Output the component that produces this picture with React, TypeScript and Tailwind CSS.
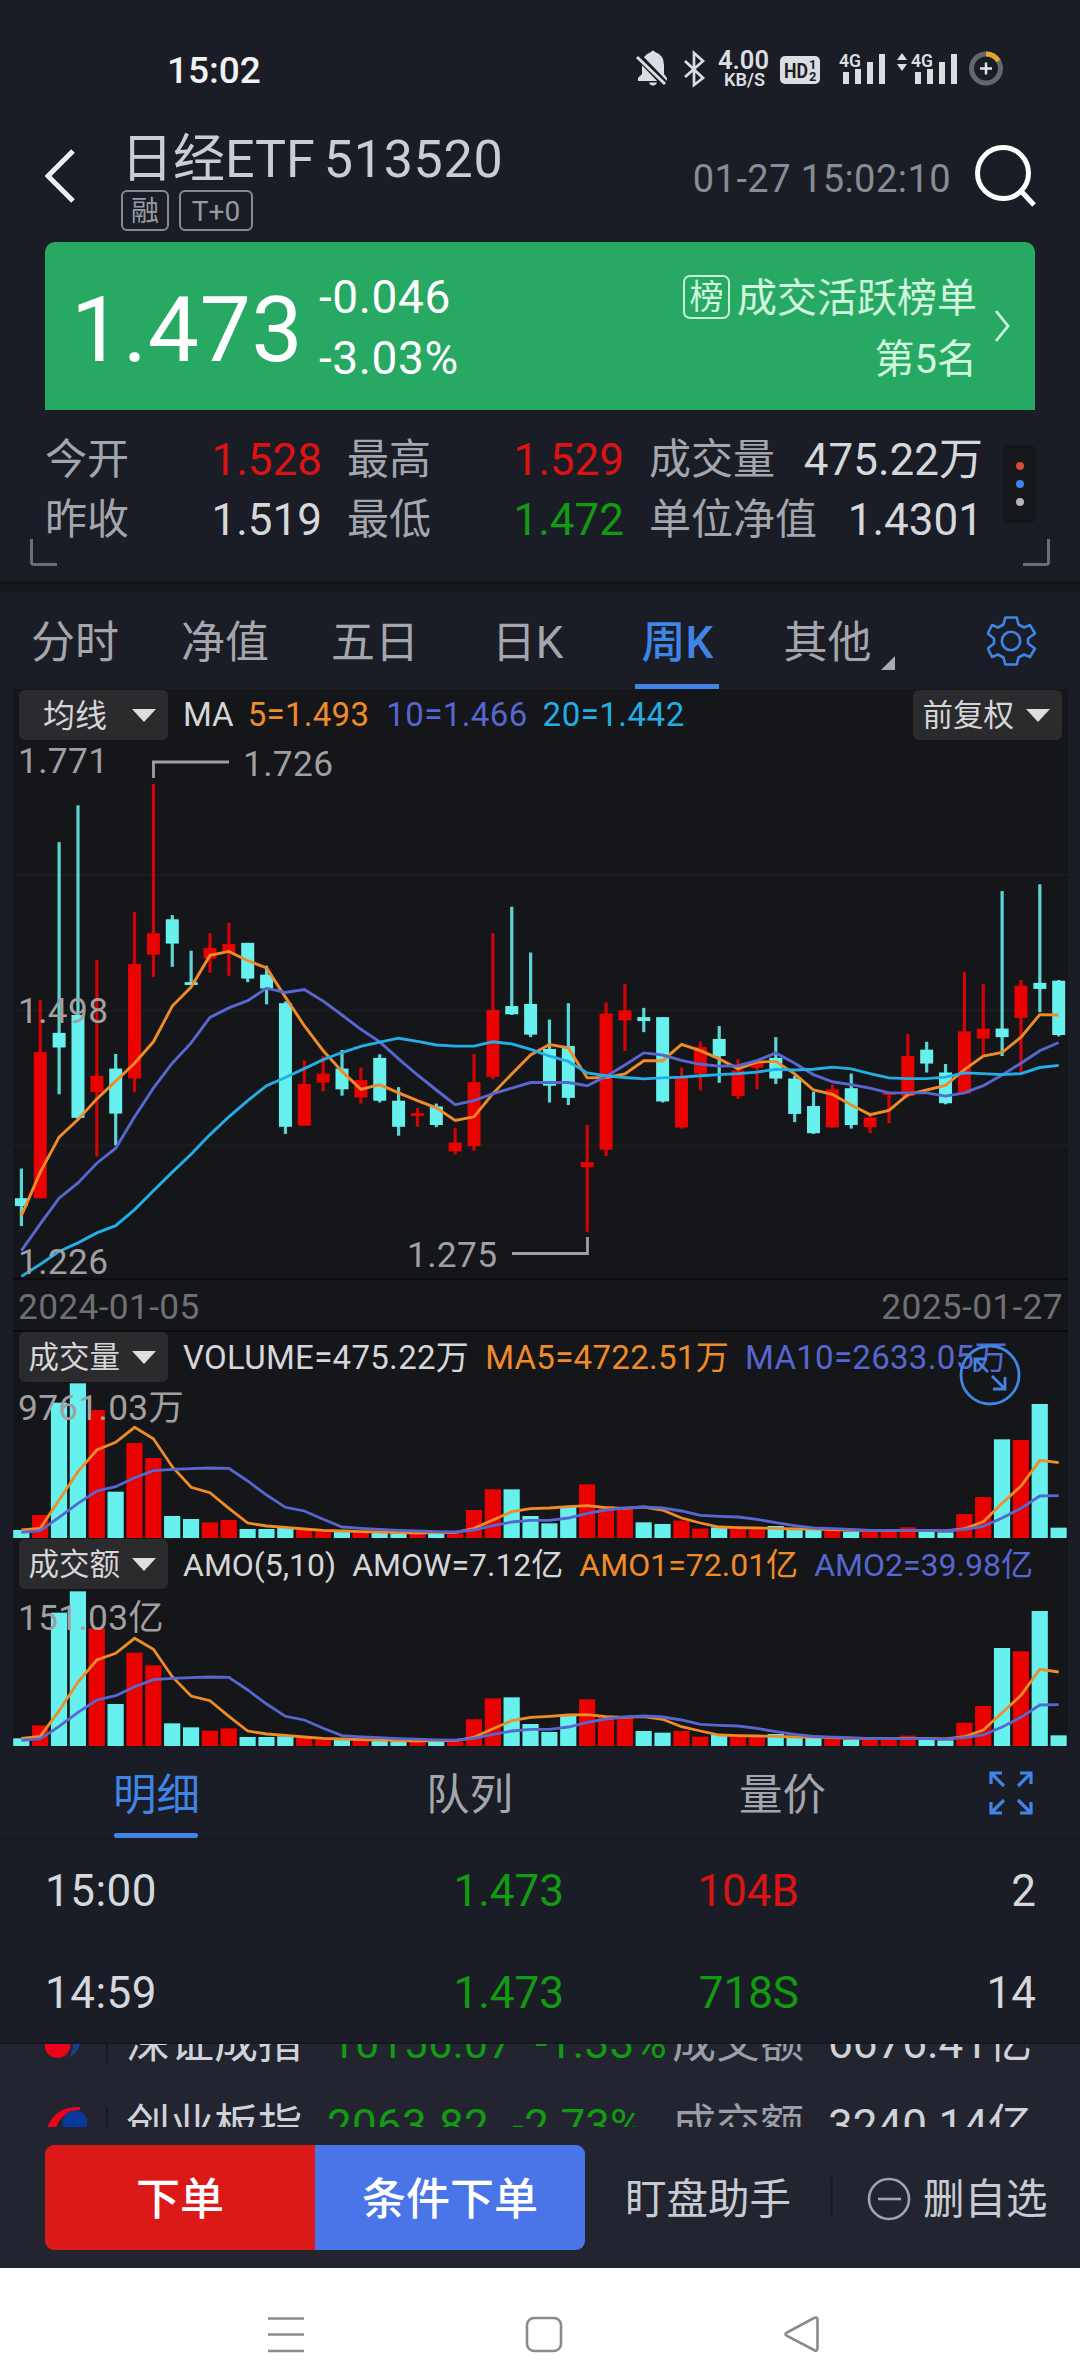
import React from "react";

type Candle = [string, number, number, number, number];

// colour, high, body top, body bottom, low
const candles: Candle[] = [
  ["c", 1200, 1283, 1305, 1361], ["r", 728, 874, 1283, 1283], ["c", 286, 820, 861, 992], ["c", 183, 770, 1058, 1063],
  ["r", 616, 940, 986, 1166], ["c", 879, 920, 1046, 1135], ["r", 482, 627, 948, 986], ["r", 123, 541, 601, 664],
  ["c", 490, 502, 570, 635], ["c", 590, 678, 686, 686], ["r", 541, 582, 612, 652], ["r", 512, 571, 596, 660],
  ["c", 568, 568, 668, 678], ["c", 632, 657, 696, 740], ["c", 732, 737, 1083, 1103], ["r", 897, 963, 1080, 1080],
  ["r", 885, 934, 959, 984], ["c", 868, 920, 978, 996], ["r", 917, 952, 1001, 1018], ["c", 880, 890, 1010, 1015],
  ["c", 972, 1010, 1083, 1108], ["r", 1030, 1045, 1053, 1083], ["c", 1018, 1026, 1078, 1084], ["r", 1086, 1127, 1152, 1160],
  ["r", 879, 958, 1137, 1150], ["r", 541, 756, 943, 950], ["c", 467, 745, 768, 770], ["c", 595, 739, 825, 832],
  ["c", 783, 865, 968, 1015], ["c", 737, 857, 1002, 1022], ["r", 1078, 1182, 1196, 1377], ["r", 735, 766, 1147, 1165],
  ["r", 683, 757, 785, 871], ["c", 750, 776, 787, 818], ["c", 776, 776, 1012, 1015], ["r", 917, 946, 1085, 1088],
  ["r", 845, 860, 934, 981], ["c", 801, 837, 885, 960], ["r", 894, 925, 997, 1005], ["r", 898, 905, 918, 978],
  ["c", 832, 890, 948, 963], ["c", 940, 948, 1047, 1070], ["c", 985, 1025, 1101, 1103], ["r", 965, 978, 1085, 1085],
  ["c", 934, 975, 1078, 1088], ["r", 1050, 1057, 1084, 1101], ["r", 985, 987, 994, 1073], ["r", 823, 885, 997, 1003],
  ["c", 845, 867, 906, 931], ["c", 907, 931, 1017, 1020], ["r", 649, 816, 990, 992], ["r", 683, 808, 836, 885],
  ["c", 423, 808, 832, 885], ["r", 672, 688, 778, 936], ["c", 404, 680, 697, 762], ["c", 672, 674, 826, 830],
];

const ma5 = [1332, 1210, 1112, 1063, 1005, 955, 905, 845, 745, 692, 603, 592, 618, 638, 720, 800, 870, 928, 978, 965, 988, 1010, 1030, 1065, 1055, 990, 935, 882, 853, 862, 946, 945, 935, 898, 898, 852, 870, 893, 921, 902, 900, 935, 980, 992, 1022, 1049, 1037, 993, 980, 967, 923, 885, 875, 832, 769, 770];
const ma10 = [1430, 1355, 1283, 1240, 1185, 1143, 1055, 975, 905, 848, 777, 750, 730, 695, 707, 699, 731, 770, 810, 845, 893, 938, 980, 1021, 1010, 990, 975, 959, 959, 959, 968, 942, 910, 876, 882, 897, 908, 913, 912, 898, 876, 905, 937, 957, 965, 975, 988, 988, 988, 997, 988, 968, 938, 905, 870, 847];
const ma20 = [1502, 1468, 1432, 1408, 1380, 1360, 1315, 1262, 1210, 1160, 1105, 1055, 1010, 968, 945, 920, 895, 875, 858, 846, 835, 844, 854, 857, 857, 845, 851, 866, 885, 900, 932, 940, 945, 949, 946, 944, 940, 937, 934, 930, 922, 924, 922, 916, 921, 934, 946, 948, 948, 944, 932, 934, 937, 934, 917, 911];

const volume = [720, 675, 338, 280, 360, 605, 459, 504, 678, 687, 697, 690, 717, 717, 714, 720, 724, 726, 727, 728, 730, 731, 728, 730, 660, 598, 598, 678, 700, 650, 583, 648, 655, 697, 702, 692, 716, 712, 716, 718, 708, 716, 718, 722, 725, 726, 724, 712, 726, 727, 672, 621, 448, 450, 342, 713];
const amount = [721, 682, 344, 280, 391, 618, 464, 502, 676, 688, 698, 691, 717, 717, 715, 720, 724, 726, 727, 728, 730, 731, 728, 730, 664, 601, 598, 678, 702, 651, 604, 654, 656, 699, 704, 699, 716, 710, 716, 718, 708, 716, 718, 722, 725, 726, 724, 713, 726, 727, 674, 624, 450, 460, 339, 712];
const volMa5 = [720, 715, 630, 545, 480, 457, 412, 446, 530, 592, 608, 655, 699, 708, 712, 717, 721, 723, 725, 726, 728, 729, 728, 728, 715, 690, 665, 656, 654, 650, 647, 653, 655, 651, 660, 684, 699, 711, 713, 714, 715, 717, 717, 719, 721, 721, 722, 721, 721, 723, 716, 695, 640, 588, 511, 518];
const volMa10 = [727, 722, 682, 640, 603, 590, 563, 542, 538, 536, 534, 535, 573, 615, 652, 663, 688, 711, 715, 718, 721, 723, 725, 726, 720, 707, 696, 691, 691, 684, 670, 660, 654, 651, 654, 663, 676, 679, 681, 688, 698, 707, 714, 716, 718, 721, 721, 721, 721, 723, 718, 709, 684, 655, 618, 617];
const amoMa5 = [721, 715, 638, 552, 486, 466, 421, 454, 536, 594, 608, 655, 699, 708, 712, 717, 721, 723, 725, 726, 728, 729, 728, 728, 718, 692, 668, 658, 655, 651, 650, 656, 658, 656, 664, 686, 699, 711, 713, 714, 715, 717, 717, 719, 721, 721, 722, 721, 721, 723, 716, 696, 644, 592, 514, 522];
const amoMa10 = volMa10.map((v) => v + 3 - Math.max(0, v - 700) / 10);

const RED = "#ea0201";
const CYAN = "#66f1ee";
const ORANGE = "#f08c28";
const VIOLET = "#5767cf";
const SKY = "#23aee6";

// centre of the i-th week inside the chart panel
const cx = (i: number) => 8.4 + i * 18.86;

const line = (values: number[], y: (v: number) => number) =>
  values.map((v, i) => `${cx(i).toFixed(1)},${y(v).toFixed(1)}`).join(" ");

const fontStack = "font-[Roboto,'Noto_Sans_CJK_SC',sans-serif]";

function StatusBar() {
  return (
    <div className="flex h-[138px] items-center justify-between pl-[167px] pr-[69px]">
      <div className="pt-[3px] text-[37px] font-medium text-[#f1f2f4]">15:02</div>
      <svg width="380" height="60" viewBox="0 0 380 60" className="fill-[#dcdde1] font-[Roboto]">
        {/* muted bell */}
        <path d="M20 13q2-3 4 0q9 3 9 13v9l3 4v3H7v-3l4-4v-9q0-10 9-13zM18 43.500h8q-1 3-4 3t-4-3z" />
        <path d="M6 16L34 45" stroke="#1a1d25" strokeWidth="7" />
        <path d="M6 18L34 45" stroke="#dcdde1" strokeWidth="3" />
        {/* bluetooth */}
        <path d="M54 22L72 39L63 46V14L72 22L54 38" fill="none" stroke="#dcdde1" strokeWidth="2.700" />
        <text x="87" y="30" fontSize="25" fontWeight="600" textLength="51" lengthAdjust="spacingAndGlyphs">4.00</text>
        <text x="93" y="47" fontSize="18.500" fontWeight="600" textLength="41" lengthAdjust="spacingAndGlyphs">KB/S</text>
        <rect x="149" y="17" width="40" height="28" rx="5" />
        <g fill="#1a1d25" fontWeight="700">
          <text x="153" y="38.500" fontSize="21" textLength="24" lengthAdjust="spacingAndGlyphs">HD</text>
          <text x="178" y="30" fontSize="13">1</text>
          <text x="178" y="42" fontSize="13">2</text>
        </g>
        <g>
          <text x="208" y="27.500" fontSize="19" fontWeight="600" textLength="22" lengthAdjust="spacingAndGlyphs">4G</text>
          <path d="M212 33h6v12h-6zM224 30h6v15h-6zM236 23h6v22h-6zM248 15h6v30h-6z" />
        </g>
        <g>
          <path d="M266 21l5-7l5 7zM266 25l5 7l5-7z" />
          <text x="280" y="27.500" fontSize="19" fontWeight="600" textLength="22" lengthAdjust="spacingAndGlyphs">4G</text>
          <path d="M284 33h6v12h-6zM296 30h6v15h-6zM308 23h6v22h-6zM320 15h6v30h-6z" />
        </g>
        <circle cx="355" cy="29.500" r="14.500" fill="none" stroke="#64676d" strokeWidth="5" />
        <path d="M355 15A14.500 14.500 0 0 1 367.500 22" fill="none" stroke="#e3a62f" strokeWidth="5" />
        <path d="M355 23.500v12M349 29.500h12" stroke="#e4e5e8" strokeWidth="2.500" />
      </svg>
    </div>
  );
}

function Header() {
  return (
    <div className="flex h-[104px] pl-[45px] pr-[44px]">
      <svg width="31" height="56" viewBox="0 0 31 56" className="mt-[10px]">
        <path d="M28 3L3 28L28 53" fill="none" stroke="#f0f1f3" strokeWidth="5" />
      </svg>
      <div className="ml-[45px] flex-1">
        <div className="pt-[2px] text-[52px] leading-[40px] whitespace-nowrap text-[#cbcdd2]">
          日经ETF<span className="ml-[9px] tracking-[0.7px]">513520</span>
        </div>
        <div className="mt-[10px] flex gap-[10px] text-[28px] leading-[39px] text-[#969aa1]">
          <div className="h-[41px] w-[48px] rounded-[6px] border-2 border-[#868a91] text-center">融</div>
          <div className="h-[41px] w-[74px] rounded-[6px] border-2 border-[#868a91] text-center">T+0</div>
        </div>
      </div>
      <div className="mt-[21px] text-[38px] leading-[40px] tracking-[0.45px] text-[#898c93]">01-27 15:02:10</div>
      <svg width="62" height="64" viewBox="0 0 62 64" className="ml-[23px] mt-[6px]">
        <circle cx="29" cy="29" r="25.500" fill="none" stroke="#fff" strokeWidth="5" />
        <path d="M47 47L60 61" stroke="#fff" strokeWidth="5" />
      </svg>
    </div>
  );
}

function PriceCard() {
  return (
    <div className="mx-[45px] flex h-[168px] rounded-t-[10px] bg-[#27a963] pl-[26px] pr-[24px] text-white">
      <div className="w-[248px] pt-[43px] text-[91px] leading-[90px] tracking-[0.8px]">1.473</div>
      <div className="pt-[25px] text-[46px] leading-[61px] tracking-[0.6px]">
        <div>-0.046</div>
        <div>-3.03%</div>
      </div>
      <div className="ml-auto flex flex-col items-end pt-[26px] text-[40px] leading-[61px] text-[#d0f7df]">
        <div className="flex items-center">
          <span className="-mt-[4px] mr-[7px] h-[44px] w-[47px] rounded-[7px] border-2 border-[#c5f0d5] text-center text-[34px] leading-[40px]">榜</span>
          <span>成交活跃榜单</span>
        </div>
        <div>第5名</div>
      </div>
      <svg width="17" height="34" viewBox="0 0 17 34" className="ml-[17px] mt-[67px]">
        <path d="M2 2L14 17L2 32" fill="none" stroke="#d0f7df" strokeWidth="2.800" />
      </svg>
    </div>
  );
}

const stats = [
  { width: "w-[277px]", rows: [["今开", "1.528", "text-[#dd1313]"], ["昨收", "1.519", "text-[#d6d8dc]"]] },
  { width: "w-[277px]", rows: [["最高", "1.529", "text-[#dd1313]"], ["最低", "1.472", "text-[#139a13]"]] },
  { width: "w-[334px]", rows: [["成交量", "475.22万", "text-[#d6d8dc]"], ["单位净值", "1.4301", "text-[#d6d8dc]"]] },
];

function Stats() {
  return (
    <div className="relative flex h-[171px] pl-[45px] pt-[20px]">
      {stats.map((col, i) => (
        <div key={i} className={`${col.width} ${i < 2 ? "mr-[25px]" : ""} leading-[60px]`}>
          {col.rows.map(([label, value, color]) => (
            <div key={label} className="flex justify-between whitespace-nowrap">
              <span className="text-[42px] text-[#a3a6ac]">{label}</span>
              <span className={`text-[44px] ${color}`}>{value}</span>
            </div>
          ))}
        </div>
      ))}
      <div className="ml-[20px] mt-[15px] flex h-[78px] w-[33px] flex-col items-center justify-center gap-[10px] rounded-md bg-[#15171a]">
        <div className="h-[8px] w-[8px] rounded-full bg-[#d44b3d]" />
        <div className="h-[8px] w-[8px] rounded-full bg-[#4086ea]" />
        <div className="h-[8px] w-[8px] rounded-full bg-[#b5b5b7]" />
      </div>
      <div className="absolute left-[30px] top-[129px] h-[27px] w-[27px] rounded-bl-[4px] border-b-[3px] border-l-[3px] border-[#6b6e75]" />
      <div className="absolute right-[30px] top-[129px] h-[27px] w-[27px] rounded-br-[4px] border-b-[3px] border-r-[3px] border-[#6b6e75]" />
    </div>
  );
}

function Gear() {
  return (
    <svg width="50" height="50" viewBox="0 0 50 50" fill="none" stroke="#3f84e6" strokeWidth="2.600" strokeLinejoin="round">
      <path d="M18.300 1.500H29.700L31.500 8.500L37 11.500L43 9L48 17.500L41 22.500V27.500L48 32.500L43 41L37 38.500L31.500 41.500L29.700 48.500H18.300L16.500 41.500L11 38.500L5 41L0.800 32.500L7 27.500V22.500L0.800 17.500L5 9L11 11.500L16.500 8.500z" />
      <circle cx="24" cy="25" r="9.200" />
    </svg>
  );
}

function PeriodTabs() {
  const tabs = ["分时", "净值", "五日", "日K", "周K", "其他"];
  return (
    <div className="flex h-[97px] text-[44px] leading-[103px] text-[#a3a6ac]">
      {tabs.map((tab, i) => (
        <div key={tab} className={`relative w-[150px] text-center ${tab === "周K" ? "font-medium text-[#3f84e6]" : ""}`}>
          <span className={i > 2 ? "pl-[5px]" : ""}>{tab}</span>
          {tab === "周K" && <div className="absolute bottom-0 left-[35px] h-[5px] w-[84px] bg-[#3f84e6]" />}
          {tab === "其他" && (
            <svg width="14" height="14" className="absolute left-[131px] top-[64px]">
              <path d="M14 0V14H0z" fill="#a9abb0" />
            </svg>
          )}
        </div>
      ))}
      <div className="ml-[87px] mt-[24px]">
        <Gear />
      </div>
    </div>
  );
}

function Picker({ label }: { label: string }) {
  return (
    <div className="flex h-[50px] w-[149px] shrink-0 items-center justify-end rounded-[6px] bg-[#2b2b2d] pr-[12px] tracking-normal text-[#d5d6d9]">
      <span className={label === "均线" ? "mr-[25px] pt-[2px] text-[32px]" : "mr-[12px] pt-[2px] text-[30.500px]"}>{label}</span>
      <svg width="24" height="13">
        <path d="M0 0H24L12 13z" fill="#dedee0" />
      </svg>
    </div>
  );
}

function PriceChart() {
  const y = (v: number) => v / 2.8;
  return (
    <svg width="1055" height="592" viewBox="0 0 1055 592" className="block font-[Roboto] tracking-[0.35px]">
      <path d="M0 135h1055M0 270.500h1055M0 405.500h1055" stroke="#1c1d20" strokeWidth="2" />
      <path d="M0 539h1055M0 591h1055" stroke="#0b0c0e" strokeWidth="2" />
      {candles.map(([kind, high, top, bottom, low], i) => (
        <g key={i} fill={kind === "r" ? RED : CYAN}>
          <rect x={cx(i) - 1.6} y={y(high)} width="3.200" height={y(low - high)} opacity={0.88} />
          <rect x={cx(i) - 6.5} y={y(top)} width="13" height={y(bottom - top)} />
        </g>
      ))}
      <g fill="none" strokeWidth="2.900">
        <polyline points={line(ma5, y)} stroke={ORANGE} />
        <polyline points={line(ma10, y)} stroke={VIOLET} />
        <polyline points={line(ma20, y)} stroke={SKY} />
      </g>
      <path d="M140.500 38V22H216M499 513.500H574.500V497" fill="none" stroke="#a0a0a2" strokeWidth="2.800" />
      <g fill="#a0a0a2" fontSize="35.300">
        <text x="5" y="33">1.771</text>
        <text x="230" y="36">1.726</text>
        <text x="5" y="283">1.498</text>
        <text x="5" y="534">1.226</text>
        <text x="394" y="527">1.275</text>
      </g>
      <g fill="#6f7073" fontSize="35.300">
        <text x="5" y="579">2024-01-05</text>
        <text x="1050" y="579" textAnchor="end">2025-01-27</text>
      </g>
    </svg>
  );
}

type BarsProps = { bars: number[]; short: number[]; long: number[]; label: string; labelY: number };

function Bars({ bars, short, long, label, labelY }: BarsProps) {
  const y = (v: number) => (v - 273) / 3;
  return (
    <svg width="1055" height="158" viewBox="0 0 1055 158" className="block font-[Roboto,'Noto_Sans_CJK_SC'] tracking-[0.3px]">
      {bars.map((v, i) => (
        <rect key={i} x={cx(i) - 8.2} y={y(v)} width="16.200" height={y(744) - y(v)} fill={candles[i][0] === "r" ? RED : CYAN} />
      ))}
      <g fill="none" strokeWidth="2.800">
        <polyline points={line(short, y)} stroke={ORANGE} />
        <polyline points={line(long, y)} stroke={VIOLET} />
      </g>
      <text x="5" y={labelY} fontSize="35.300" fill="#a0a0a2">{label}</text>
    </svg>
  );
}

function DetailTabs() {
  return (
    <div className="flex h-[91px] text-[43.500px] leading-[97px] text-[#a3a6ac]">
      <div className="relative w-[313px] text-center text-[#3f84e6]">
        明细
        <div className="absolute bottom-0 left-[114px] h-[5px] w-[84px] rounded-[2px] bg-[#3f84e6]" />
      </div>
      <div className="w-[313px] text-center">队列</div>
      <div className="w-[313px] text-center">量价</div>
      <svg width="44" height="44" viewBox="0 0 44 44" fill="none" stroke="#3f84e6" strokeWidth="3.200" className="ml-[50px] mt-[24px]">
        <path d="M2 13V2H13M2 2L15 15M31 2H42V13M42 2L29 15M2 31V42H13M2 42L15 29M31 42H42V31M42 42L29 29" />
      </svg>
    </div>
  );
}

const trades = [
  ["15:00", "1.473", "104B", "text-[#dd1313]", "2"],
  ["14:59", "1.473", "718S", "text-[#139a13]", "14"],
];

function Trades() {
  return (
    <div className="h-[204px] border-t-2 border-[#171a20] text-[44px] leading-[103px] text-[#d6d8dc]">
      {trades.map(([time, price, count, color, n]) => (
        <div key={time} className="flex h-[102px] pl-[45px] pr-[44px]">
          <div className="w-[200px] tracking-[0.5px]">{time}</div>
          <div className="w-[319px] text-right text-[#139a13]">{price}</div>
          <div className={`w-[235px] text-right ${color}`}>{count}</div>
          <div className="flex-1 text-right">{n}</div>
        </div>
      ))}
    </div>
  );
}

function IndexTicker() {
  return (
    <div className="h-[85px] overflow-hidden border-t-2 border-[#15181e] bg-[#222530] text-[44px] leading-[83px] whitespace-nowrap text-[#d0d2d8]">
      <div className="-mt-[42px]">
        <div className="flex h-[83px] items-center pl-[45px]">
          <svg width="42" height="42" viewBox="0 0 42 42">
            <path d="M36 12Q37 27 24 35Q30 25 27 12z" fill="#1a3f92" />
            <circle cx="12.500" cy="22" r="13" fill="#e9041c" />
          </svg>
          <div className="ml-[19px] h-[40px] w-[2px] bg-[#181a20]" />
          <div className="ml-[18px] w-[205px]">深证成指</div>
          <div className="w-[204px] text-[42.500px] tracking-[0.4px] text-[#139a13]">10156.07</div>
          <div className="w-[137px] tracking-[0.3px] text-[#139a13]">-1.33%</div>
          <div className="text-[#9b9ea6]">成交额</div>
          <div className="ml-[24px]">6676.41亿</div>
        </div>
        <div className="flex h-[83px] items-center pl-[45px]">
          <svg width="42" height="42" viewBox="0 0 42 42">
            <path d="M35 1Q10 0 2 22L11 22Q17 5 35 4z" fill="#e9041c" />
            <circle cx="30" cy="17" r="12.500" fill="#08399b" />
          </svg>
          <div className="ml-[19px] h-[40px] w-[2px] bg-[#181a20]" />
          <div className="ml-[18px] w-[201px]">创业板指</div>
          <div className="w-[185px] tracking-[0.3px] text-[#139a13]">2063.82</div>
          <div className="w-[160px] text-[#139a13]">-2.73%</div>
          <div className="text-[#9b9ea6]">成交额</div>
          <div className="ml-[24px]">3240.14亿</div>
        </div>
      </div>
    </div>
  );
}

function ActionBar() {
  return (
    <div className="flex h-[141px] bg-[#222530] pl-[45px] pt-[18px] text-[41.500px] leading-[110px] whitespace-nowrap text-[#c9cbd2]">
      <div className="flex h-[105px] w-[540px] overflow-hidden rounded-[9px] text-center text-[44px] font-medium text-white">
        <div className="w-1/2 bg-[#dc1919]">下单</div>
        <div className="w-1/2 bg-[#4a75e8]">条件下单</div>
      </div>
      <div className="ml-[40px]">盯盘助手</div>
      <div className="ml-[39px] mt-[32px] h-[40px] w-[3px] bg-[#191b21]" />
      <svg width="44" height="44" viewBox="0 0 44 44" fill="none" stroke="#a2a5ac" strokeWidth="2.600" className="ml-[34px] mt-[32px]">
        <circle cx="22" cy="22" r="20" />
        <path d="M11 22h23" />
      </svg>
      <div className="ml-[12px]">删自选</div>
    </div>
  );
}

function NavBar() {
  return (
    <div className="flex h-[102px] bg-white pl-[268px] pt-[47px]">
      <svg width="551" height="40" viewBox="0 0 551 40" fill="none" stroke="#8b8b8b" strokeWidth="2.600">
        <path d="M0 3.500h36M0 19.500h36M0 36h36" />
        <rect x="259" y="3" width="34" height="33" rx="7" />
        <path d="M519 17.500L546 3Q549.500 1.500 549.500 5V33Q549.500 37 546 35L519 21Q516 19 519 17.500z" />
      </svg>
    </div>
  );
}

function App() {
  return (
    <div className={`h-[2370px] w-[1080px] overflow-hidden bg-[#1a1d25] ${fontStack}`}>
      <StatusBar />
      <Header />
      <PriceCard />
      <Stats />
      <div className="h-[11px] bg-[#15171b]" />
      <PeriodTabs />
      <div className="mx-[13px] h-[1058px] w-[1055px] bg-[#151619] text-[33px] leading-[50px] whitespace-nowrap">
        <div className="flex h-[51px] pl-[6px] pr-[6px] pt-[1px]">
          <Picker label="均线" />
          <span className="ml-[15px] text-[#d5d6d9]">MA</span>
          <span className="ml-[14px] tracking-[0.3px] text-[#f08c28]">5=1.493</span>
          <span className="ml-[17px] tracking-[0.4px] text-[#5767cf]">10=1.466</span>
          <span className="ml-[15px] tracking-[0.5px] text-[#23aee6]">20=1.442</span>
          <div className="ml-auto">
            <Picker label="前复权" />
          </div>
        </div>
        <PriceChart />
        <div className="relative flex h-[49px] pl-[6px] leading-[52px] tracking-[0.3px]">
          <Picker label="成交量" />
          <span className="ml-[15px] text-[#d5d6d9]">VOLUME=475.22万</span>
          <span className="ml-[16px] text-[#f08c28]">MA5=4722.51万</span>
          <span className="ml-[16px] text-[#5767cf]">MA10=2633.05万</span>
          <svg width="62" height="62" viewBox="0 0 62 62" fill="none" stroke="#4086e2" strokeWidth="2.800" className="absolute left-[946px] top-[12px]">
            <circle cx="31" cy="31" r="29" />
            <path d="M29 28L16 15M16 28V15H28M33 32L46 45M46 33V45H34" />
          </svg>
        </div>
        <Bars bars={volume} short={volMa5} long={volMa10} label="9761.03万" labelY={39} />
        <div className="flex h-[50px] pl-[6px] text-[32px] leading-[52px]">
          <Picker label="成交额" />
          <span className="ml-[15px] text-[#d5d6d9]">AMO(5,10)</span>
          <span className="ml-[16px] text-[#d5d6d9]">AMOW=7.12亿</span>
          <span className="ml-[16px] text-[#f08c28]">AMO1=72.01亿</span>
          <span className="ml-[16px] text-[#5767cf]">AMO2=39.98亿</span>
        </div>
        <Bars bars={amount} short={amoMa5} long={amoMa10} label="151.03亿" labelY={41} />
      </div>
      <DetailTabs />
      <Trades />
      <IndexTicker />
      <ActionBar />
      <NavBar />
    </div>
  );
}

export default App;
